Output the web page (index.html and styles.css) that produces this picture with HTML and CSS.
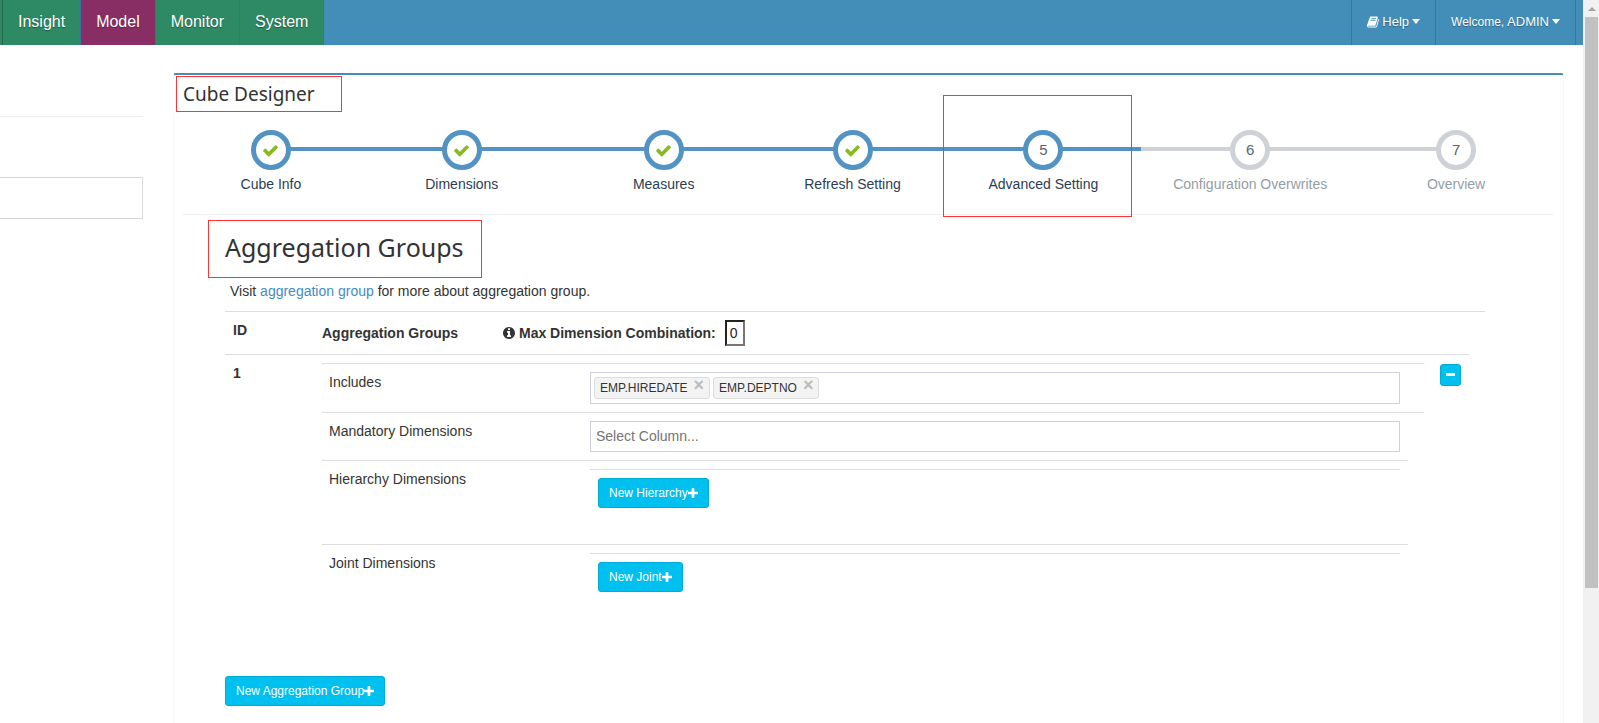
FILE: index.html
```html
<!DOCTYPE html>
<html lang="en">
<head>
<meta charset="utf-8">
<title>Cube Designer</title>
<link rel="stylesheet" href="styles.css">
</head>
<body>
<svg class="sprite" aria-hidden="true">
  <symbol id="check" viewBox="0 0 1792 1792"><path d="M1671 566q0 40-28 68l-724 724-136 136q-28 28-68 28t-68-28l-136-136-362-362q-28-28-28-68t28-68l136-136q28-28 68-28t68 28l294 295 656-657q28-28 68-28t68 28l136 136q28 28 28 68z"/></symbol>
  <symbol id="plus" viewBox="192 128 1408 1408"><path d="M1600 736v192q0 40-28 68t-68 28h-416v416q0 40-28 68t-68 28h-192q-40 0-68-28t-28-68v-416h-416q-40 0-68-28t-28-68v-192q0-40 28-68t68-28h416v-416q0-40 28-68t68-28h192q40 0 68 28t28 68v416h416q40 0 68 28t28 68z"/></symbol>
  <symbol id="info" viewBox="128 128 1536 1536"><path d="M1152 1376v-160q0-14-9-23t-23-9h-96v-512q0-14-9-23t-23-9h-320q-14 0-23 9t-9 23v160q0 14 9 23t23 9h96v320h-96q-14 0-23 9t-9 23v160q0 14 9 23t23 9h448q14 0 23-9t9-23zm-128-896v-160q0-14-9-23t-23-9h-192q-14 0-23 9t-9 23v160q0 14 9 23t23 9h192q14 0 23-9t9-23zm640 416q0 209-103 385.5t-279.5 279.5-385.5 103-385.5-103-279.5-279.5-103-385.5 103-385.5 279.5-279.5 385.5-103 385.5 103 279.5 279.5 103 385.5z"/></symbol>
  <symbol id="book" viewBox="64 64 1664 1664"><path d="M1703 478q40 57 18 129l-275 906q-19 64-76.5 107.5t-122.5 43.5h-923q-77 0-148.5-53.5t-99.5-131.5q-24-67-2-127 0-4 3-27t4-37q1-8-3-21.5t-3-19.5q2-11 8-21t16.5-23.5 16.5-23.5q23-38 45-91.5t30-91.5q3-10 .5-30t-.5-28q3-11 17-28t17-23q21-36 42-92t25-90q1-9-2.5-32t.5-28q4-13 22-30.5t22-22.5q19-26 42.5-84.5t27.5-96.5q1-8-3-25.5t-2-26.5q2-8 9-18t18-23 17-21q8-12 16.5-30.5t15-35 16-36 19.5-32 26.5-23.5 36-11.5 47.5 5.5l-1 3q38-9 51-9h761q74 0 114 56t18 130l-274 906q-36 119-71.5 153.5t-128.5 34.5h-869q-27 0-38 15-11 16-1 43 24 70 144 70h923q29 0 56-15.5t35-41.5l300-987q7-22 5-57 38 15 59 43zm-1064 2q-4 13 2 22.5t20 9.5h608q13 0 25.5-9.5t16.5-22.5l21-64q4-13-2-22.5t-20-9.5h-608q-13 0-25.5 9.5t-16.5 22.5zm-83 256q-4 13 2 22.5t20 9.5h608q13 0 25.5-9.5t16.5-22.5l21-64q4-13-2-22.5t-20-9.5h-608q-13 0-25.5 9.5t-16.5 22.5z"/></symbol>
</svg>
<div class="window">
  <div class="app">
    <header class="navbar">
      <nav class="menu">
        <a href="#insight">Insight</a>
        <a href="#model" class="current">Model</a>
        <a href="#monitor">Monitor</a>
        <a href="#system">System</a>
      </nav>
      <nav class="user-menu">
        <a href="#help"><svg class="book"><use href="#book"/></svg><span>Help</span><i class="caret"></i></a>
        <a href="#account"><span><small>Welcome,</small> ADMIN</span><i class="caret"></i></a>
      </nav>
    </header>
    <div class="body">
      <aside class="side">
        <hr>
        <input type="text" aria-label="Filter">
      </aside>
      <main class="box">
        <h3 class="box-title">Cube Designer</h3>
        <ol class="steps">
          <li class="done"><span class="dot"><svg><use href="#check"/></svg></span><span>Cube Info</span></li>
          <li class="done"><span class="dot"><svg><use href="#check"/></svg></span><span>Dimensions</span></li>
          <li class="done"><span class="dot"><svg><use href="#check"/></svg></span><span>Measures</span></li>
          <li class="done"><span class="dot"><svg><use href="#check"/></svg></span><span>Refresh Setting</span></li>
          <li class="done marked"><span class="dot">5</span><span>Advanced Setting</span></li>
          <li><span class="dot">6</span><span>Configuration Overwrites</span></li>
          <li><span class="dot">7</span><span>Overview</span></li>
        </ol>
        <section class="groups">
          <h2 class="heading">Aggregation Groups</h2>
          <p class="hint">Visit <a href="#docs">aggregation group</a> for more about aggregation group.</p>
          <div class="table-wrap">
            <table>
              <thead>
                <tr>
                  <th class="id" scope="col">ID</th>
                  <th scope="col">
                    <div class="head">
                      <span class="head-name">Aggregation Groups</span>
                      <svg class="info"><use href="#info"/></svg>
                      <label for="mdc">Max Dimension Combination:</label>
                      <input id="mdc" class="mdc" type="text" value="0">
                    </div>
                  </th>
                  <th class="action"></th>
                </tr>
              </thead>
              <tbody>
                <tr>
                  <th class="id" scope="row">1</th>
                  <td>
                    <div class="row">
                      <label for="includes">Includes</label>
                      <div class="select tags">
                        <span class="tag">EMP.HIREDATE<button type="button" class="close" aria-label="Remove EMP.HIREDATE">×</button></span>
                        <span class="tag">EMP.DEPTNO<button type="button" class="close" aria-label="Remove EMP.DEPTNO">×</button></span>
                        <input id="includes" type="text">
                      </div>
                    </div>
                    <div class="row">
                      <label for="mandatory">Mandatory Dimensions</label>
                      <input id="mandatory" class="select" type="text" placeholder="Select Column...">
                    </div>
                    <div class="row nested">
                      <span class="name">Hierarchy Dimensions</span>
                      <div class="list"><button type="button" class="btn">New Hierarchy<svg><use href="#plus"/></svg></button></div>
                    </div>
                    <div class="row nested">
                      <span class="name">Joint Dimensions</span>
                      <div class="list"><button type="button" class="btn">New Joint<svg><use href="#plus"/></svg></button></div>
                    </div>
                  </td>
                  <td class="action"><button type="button" class="btn remove" aria-label="Remove group"><i></i></button></td>
                </tr>
              </tbody>
            </table>
          </div>
          <button type="button" class="btn">New Aggregation Group<svg><use href="#plus"/></svg></button>
        </section>
      </main>
    </div>
  </div>
  <div class="scrollbar"><i class="arrow"></i><div class="thumb"></div></div>
</div>
</body>
</html>
```
FILE: styles.css
```css
* { box-sizing: border-box; }
body {
  margin: 0;
  background: #fff;
  color: #333;
  font: 14px/20px "Liberation Sans", Arial, sans-serif;
}
a { color: #428bca; text-decoration: none; }
svg { fill: currentColor; flex: none; }
input, button { font: inherit; }
.sprite { display: none; }
.window { display: flex; height: 100vh; overflow: hidden; }
.app { flex: 1; min-width: 0; display: flex; flex-direction: column; }

/* top bar */
.navbar {
  flex: none;
  display: flex;
  justify-content: space-between;
  height: 45px;
  background: #438eb9;
}
.navbar a { color: #fff; text-shadow: 0 1px 1px rgba(0, 0, 0, .35); }
.menu { display: flex; border-left: 2px solid #2e8965; }
.menu a {
  padding: 0 15px;
  border-right: 1px solid #34749a;
  background: #2e8965;
  font-size: 16px;
  line-height: 44px;
}
.menu a:first-child { border-left: 1px solid #24694f; }
.menu .current { background: #892e65; }
.user-menu { display: flex; margin-right: 7px; border-right: 1px solid #2c7da3; }
.user-menu a {
  display: flex;
  align-items: center;
  gap: 3px;
  padding: 0 15px 2px;
  border-left: 1px solid #2c7da3;
  font-size: 13px;
}
.user-menu small { font-size: 12px; }
.book { width: 12px; height: 12px; }
.caret { border: 4px solid transparent; border-top: 5px solid #fff; border-bottom: 0; }

/* page body */
.body { flex: 1; display: flex; gap: 30px; min-height: 0; }
.side { flex: 0 0 143px; padding-top: 71px; }
.side hr { margin: 0 0 60px; border: 0; border-top: 1px solid #eee; }
.side input {
  display: block;
  width: 100%;
  height: 42px;
  border: 1px solid #d8d8d8;
  border-left: 0;
  background: #fff;
}
.box {
  flex: 1;
  min-width: 0;
  margin: 28px 19px 0 0;
  padding: 0 10px 0 9px;
  border: 1px solid #f8f8f8;
  border-top: 2px solid #438eb9;
  border-bottom: 0;
  border-radius: 3px 3px 0 0;
}
.box-title, .heading { font-family: "Noto Sans", "Open Sans", sans-serif; font-weight: 400; }
.box-title {
  width: 166px;
  margin: 1px 0 18px -7px;
  padding: 4px 6px;
  border: 1px solid #f33;
  font-size: 19px;
  line-height: 26px;
}

/* wizard steps */
.steps {
  display: grid;
  grid-template-columns: 170fr 212fr 192fr 186fr 196fr 218fr 194fr;
  margin: 0;
  padding: 0 0 20px 3px;
  border-bottom: 1px solid #eee;
  list-style: none;
}
.steps li {
  position: relative;
  display: flex;
  flex-direction: column;
  align-items: center;
  gap: 4px;
  color: #949ea7;
  --tone: #ced1d6;
}
.steps li::before {
  content: "";
  position: absolute;
  top: 17px;
  left: 0;
  right: 0;
  height: 4px;
  background: var(--tone);
}
.steps li:first-child::before { left: 50%; }
.steps li:last-child::before { right: 50%; }
.steps .done { color: #2b3d53; --tone: #5293c4; }
.dot {
  position: relative;
  display: flex;
  align-items: center;
  justify-content: center;
  width: 40px;
  height: 40px;
  border: 5px solid var(--tone);
  border-radius: 50%;
  background: #fff;
  color: #546474;
  font-size: 15px;
}
.dot svg { width: 17px; height: 17px; fill: #87ba21; }
.marked::after {
  content: "";
  position: absolute;
  inset: -35px 9px -23px -2px;
  border: 1px solid #f33;
}

/* aggregation groups */
.groups { padding: 5px 68px 0 25px; }
.heading {
  width: 274px;
  margin: 0 0 3px;
  padding: 9px 16px 13px;
  border: 1px solid #f33;
  font-size: 25px;
  line-height: 34px;
}
.hint { margin: 0 0 10px 22px; }
.table-wrap { margin: 0 0 48px 17px; border-top: 1px solid #ddd; }
.groups > .btn { margin-left: 17px; }
table { width: calc(100% - 16px); border-collapse: separate; border-spacing: 0; table-layout: fixed; }
th, td { padding: 8px; text-align: left; vertical-align: top; }
thead th { border-bottom: 1px solid #ddd; }
tbody td { padding-bottom: 0; }
.id { width: 89px; }
.action { width: 37px; }
.head { display: flex; align-items: center; }
.head-name { flex: 0 0 181px; }
.info { width: 12px; height: 12px; margin-right: 4px; }
.mdc {
  width: 20px;
  height: 26px;
  margin-left: 9px;
  padding: 0 3px;
  border: 2px solid;
  border-color: #222 #767676 #767676 #222;
  color: #222;
  font-weight: 400;
}
.row {
  display: grid;
  grid-template-columns: 268px 1fr;
  padding: 8px 24px 8px 0;
  border-top: 1px solid #ddd;
}
.row label, .name { padding-left: 7px; }
.nested { margin-right: 16px; padding: 8px 8px 0 0; }
.list { padding: 8px 8px 36px; border-top: 1px solid #ddd; }
.select {
  width: 100%;
  height: 31px;
  padding: 0 5px 2px;
  border: 1px solid #d0d0da;
  background: #fff;
}
.select::placeholder { color: #757575; }
.tags { display: flex; align-items: center; gap: 3px; height: 32px; padding: 0 3px; }
.tags input { flex: 1; min-width: 0; border: 0; outline: 0; background: none; }
.tag {
  display: flex;
  gap: 6px;
  height: 22px;
  padding: 0 5px;
  border: 1px solid #dcdcdc;
  border-radius: 3px;
  background: #f3f3f3;
  font-size: 12px;
}
.close {
  padding: 0 0 6px;
  border: 0;
  background: none;
  color: #bbb;
  font-size: 18px;
  font-weight: 700;
  line-height: 14px;
}
.btn {
  display: flex;
  align-items: center;
  height: 30px;
  padding: 0 10px;
  border: 1px solid #00acd6;
  border-radius: 3px;
  background: #00c0ef;
  color: #fff;
  font-size: 12px;
}
.btn svg { width: 10px; height: 10px; }
.remove { width: 21px; height: 22px; margin-top: 1px; padding: 0 5px; }
.remove i { flex: 1; height: 3px; margin-bottom: 2px; background: #fff; }

/* window scrollbar */
.scrollbar { flex: 0 0 16px; padding: 0 1px 0 2px; background: #f1f1f1; }
.arrow {
  display: block;
  width: 8px;
  margin: 7px auto 6px;
  border: 4px solid transparent;
  border-top: 0;
  border-bottom-color: #a3a3a3;
}
.thumb { height: 79%; background: #c1c1c1; }
```
